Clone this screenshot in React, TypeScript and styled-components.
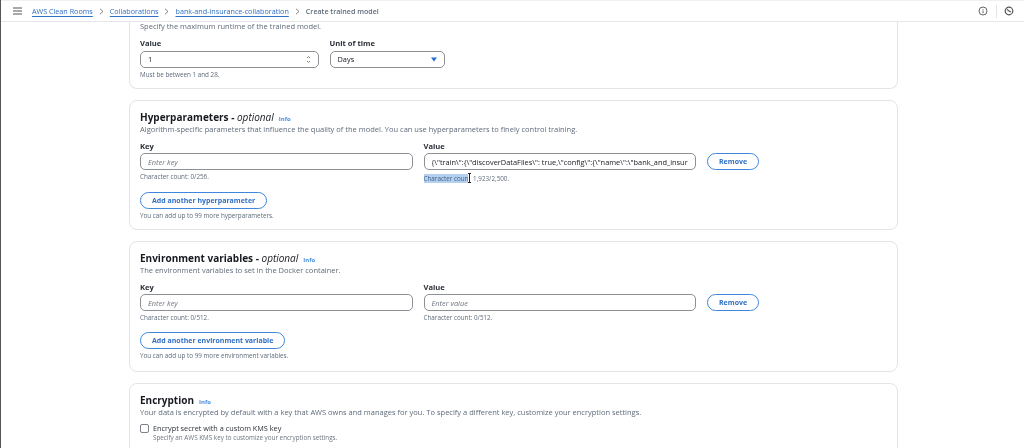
import React from "react";
import styled, { createGlobalStyle } from "styled-components";

const GlobalStyle = createGlobalStyle`
  html, body {
    margin: 0;
    padding: 0;
    background: #fff;
  }
  body {
    font-family: "Open Sans", "Liberation Sans", sans-serif;
    color: #16191f;
  }
`;

const Page = styled.div`
  width: 1024px;
  height: 448px;
  overflow: hidden;
  box-sizing: border-box;
  border-left: 1px solid #555;
  background: #fff;
  filter: blur(0.4px);
`;

const TopBar = styled.header`
  position: relative;
  z-index: 1;
  height: 22px;
  display: flex;
  align-items: center;
  box-sizing: border-box;
  padding: 0 10px 0 12px;
  background: #fff;
  border-bottom: 1.5px solid #e6e6e6;
  border-top: 1px solid #f0f0f0;
`;

const Crumbs = styled.nav`
  display: flex;
  align-items: center;
  gap: 6px;
  margin-left: 10px;
  font-size: 7.2px;
  flex: 1;
`;

const Crumb = styled.a`
  color: #2f6fc4;
  text-decoration: underline;
  text-underline-offset: 1.5px;
`;

const Current = styled.span`
  color: #5f6b7a;
  font-weight: 600;
  font-size: 7.1px;
`;

const BarIcons = styled.div`
  display: flex;
  align-items: center;
  gap: 7.5px;
`;

const BarDivider = styled.span`
  width: 1px;
  height: 13px;
  background: #e4e4e4;
`;

const Content = styled.main`
  display: flex;
  flex-direction: column;
  gap: 11px;
  margin-left: 128px;
  width: 769px;
`;

const Card = styled.section<{ $clipped?: boolean; $height: number }>`
  box-sizing: border-box;
  height: ${(p) => p.$height}px;
  margin-top: ${(p) => (p.$clipped ? "-1px" : "0")};
  padding: ${(p) => (p.$clipped ? "0" : "8.5px")} 10px 0;
  border: 1px solid #e4e4e4;
  border-bottom-width: 1.5px;
  border-top-width: ${(p) => (p.$clipped ? "0" : "1px")};
  border-radius: ${(p) => (p.$clipped ? "0 0 8px 8px" : "8px")};
`;

const Title = styled.h2`
  margin: 0;
  font-size: 10px;
  line-height: 14px;
  font-weight: 700;
  color: #16191f;
`;

const Optional = styled.em`
  font-weight: 400;
`;

const Info = styled.a`
  margin-left: 5px;
  font-size: 6px;
  line-height: 1;
  font-weight: 700;
  color: #4a8fe0;
`;

const Description = styled.p`
  margin: 0;
  font-size: 7.5px;
  line-height: 10px;
  color: #5f6b7a;
`;

const Row = styled.div`
  display: flex;
  align-items: flex-start;
  margin-top: 7px;
`;

const Field = styled.div<{ $width: number }>`
  width: ${(p) => p.$width}px;
  margin-right: 11px;
`;

const Label = styled.div`
  font-size: 7.6px;
  line-height: 10px;
  font-weight: 700;
  color: #2b3038;
  margin-bottom: 2.5px;
`;

const Input = styled.div<{ $placeholder?: boolean }>`
  box-sizing: border-box;
  height: 17px;
  display: flex;
  align-items: center;
  justify-content: space-between;
  padding: 0 7px;
  border: 1px solid #8d9196;
  border-radius: 5px;
  font-size: 7.4px;
  color: ${(p) => (p.$placeholder ? "#6f7680" : "#16191f")};
  font-style: ${(p) => (p.$placeholder ? "italic" : "normal")};
  white-space: nowrap;
  background: #fff;
`;

const InputText = styled.span`
  flex: 1;
  overflow: hidden;
`;

const Hint = styled.div`
  margin-top: 3px;
  font-size: 6.3px;
  line-height: 8px;
  color: #5f6b7a;
`;

const Selected = styled.span`
  background: #b4d0ee;
  color: #3f5f85;
`;

const Caret = styled.span`
  position: relative;
  display: inline-block;
  width: 1px;
  height: 10px;
  margin: 0 1px;
  vertical-align: -2px;
  background: #222;
  &::before,
  &::after {
    content: "";
    position: absolute;
    left: -1px;
    width: 3px;
    height: 1px;
    background: #222;
  }
  &::before {
    top: 0;
  }
  &::after {
    bottom: 0;
  }
`;

const Button = styled.button<{ $top?: number }>`
  box-sizing: border-box;
  height: 17px;
  margin-top: ${(p) => p.$top ?? 0}px;
  padding: 0 11px;
  border: 1px solid #3f87da;
  border-radius: 9px;
  background: #fff;
  color: #2f6fc4;
  font-family: inherit;
  font-size: 7px;
  font-weight: 700;
  white-space: nowrap;
`;

const CheckRow = styled.div`
  display: flex;
  align-items: flex-start;
  gap: 4.5px;
  margin-top: 6px;
`;

const CheckBox = styled.span`
  box-sizing: border-box;
  width: 8.5px;
  height: 8.5px;
  margin-top: 1.5px;
  border: 1px solid #7d8288;
  border-radius: 2px;
`;

const CheckLabel = styled.div`
  font-size: 7.3px;
  line-height: 10px;
  color: #2b3038;
`;

const CheckHint = styled.div`
  font-size: 6.3px;
  line-height: 9px;
  color: #6f7680;
`;

const MenuIcon = () => (
  <svg width="9" height="8" viewBox="0 0 9 8" fill="none" stroke="#555" strokeWidth="1">
    <path d="M0 1h9M0 4h9M0 7h9" />
  </svg>
);

const Chevron = () => (
  <svg width="5" height="7" viewBox="0 0 5 7" fill="none" stroke="#666" strokeWidth="0.8">
    <path d="M1 .8 4 3.5 1 6.2" />
  </svg>
);

const InfoIcon = () => (
  <svg width="10" height="10" viewBox="0 0 10 10" fill="none" stroke="#666" strokeWidth="1">
    <circle cx="5" cy="5" r="4" />
    <path d="M5 3v.8M5 4.5V7.2" />
  </svg>
);

const ClockIcon = () => (
  <svg width="10" height="10" viewBox="0 0 10 10" fill="none" stroke="#555" strokeWidth="1.2">
    <circle cx="5" cy="5" r="3.8" />
    <path d="M3 3.6 5 5 7 6" />
  </svg>
);

const Stepper = () => (
  <svg width="5" height="9" viewBox="0 0 5 9" fill="none" stroke="#666" strokeWidth="0.8">
    <path d="M1 3 2.5 1.5 4 3M1 6 2.5 7.5 4 6" />
  </svg>
);

const DropArrow = () => (
  <svg width="6" height="5" viewBox="0 0 6 5" fill="#1f6fd0">
    <path d="M0 .5h6L3 4.5z" />
  </svg>
);

export default function App() {
  return (
    <Page>
      <GlobalStyle />
      <TopBar>
        <MenuIcon />
        <Crumbs>
          <Crumb>AWS Clean Rooms</Crumb>
          <Chevron />
          <Crumb>Collaborations</Crumb>
          <Chevron />
          <Crumb>bank-and-insurance-collaboration</Crumb>
          <Chevron />
          <Current>Create trained model</Current>
        </Crumbs>
        <BarIcons>
          <InfoIcon />
          <BarDivider />
          <ClockIcon />
        </BarIcons>
      </TopBar>

      <Content>
        <Card $clipped $height={68}>
          <Description>Specify the maximum runtime of the trained model.</Description>
          <Row>
            <Field $width={178.5}>
              <Label>Value</Label>
              <Input>
                1
                <Stepper />
              </Input>
              <Hint>Must be between 1 and 28.</Hint>
            </Field>
            <Field $width={115}>
              <Label>Unit of time</Label>
              <Input>
                Days
                <DropArrow />
              </Input>
            </Field>
          </Row>
        </Card>

        <Card $height={130}>
          <Title>
            Hyperparameters - <Optional>optional</Optional>
            <Info>Info</Info>
          </Title>
          <Description>
            Algorithm-specific parameters that influence the quality of the model. You can use hyperparameters to finely
            control training.
          </Description>
          <Row>
            <Field $width={272.5}>
              <Label>Key</Label>
              <Input $placeholder>Enter key</Input>
              <Hint>Character count: 0/256.</Hint>
            </Field>
            <Field $width={272.5}>
              <Label>Value</Label>
              <Input>
                <InputText>{'{\\"train\\":{\\"discoverDataFiles\\": true,\\"config\\":{\\"name\\":\\"bank_and_insurance'}</InputText>
              </Input>
              <Hint>
                <Selected>Character coun</Selected>
                <Caret /> 1,923/2,500.
              </Hint>
            </Field>
            <Button $top={12.5}>Remove</Button>
          </Row>
          <Button $top={8.5}>Add another hyperparameter</Button>
          <Hint>You can add up to 99 more hyperparameters.</Hint>
        </Card>

        <Card $height={131}>
          <Title>
            Environment variables - <Optional>optional</Optional>
            <Info>Info</Info>
          </Title>
          <Description>The environment variables to set in the Docker container.</Description>
          <Row>
            <Field $width={272.5}>
              <Label>Key</Label>
              <Input $placeholder>Enter key</Input>
              <Hint>Character count: 0/512.</Hint>
            </Field>
            <Field $width={272.5}>
              <Label>Value</Label>
              <Input $placeholder>Enter value</Input>
              <Hint>Character count: 0/512.</Hint>
            </Field>
            <Button $top={12.5}>Remove</Button>
          </Row>
          <Button $top={10}>Add another environment variable</Button>
          <Hint>You can add up to 99 more environment variables.</Hint>
        </Card>

        <Card $height={90}>
          <Title>
            Encryption
            <Info>Info</Info>
          </Title>
          <Description>
            Your data is encrypted by default with a key that AWS owns and manages for you. To specify a different key,
            customize your encryption settings.
          </Description>
          <CheckRow>
            <CheckBox />
            <div>
              <CheckLabel>Encrypt secret with a custom KMS key</CheckLabel>
              <CheckHint>Specify an AWS KMS key to customize your encryption settings.</CheckHint>
            </div>
          </CheckRow>
        </Card>
      </Content>
    </Page>
  );
}
